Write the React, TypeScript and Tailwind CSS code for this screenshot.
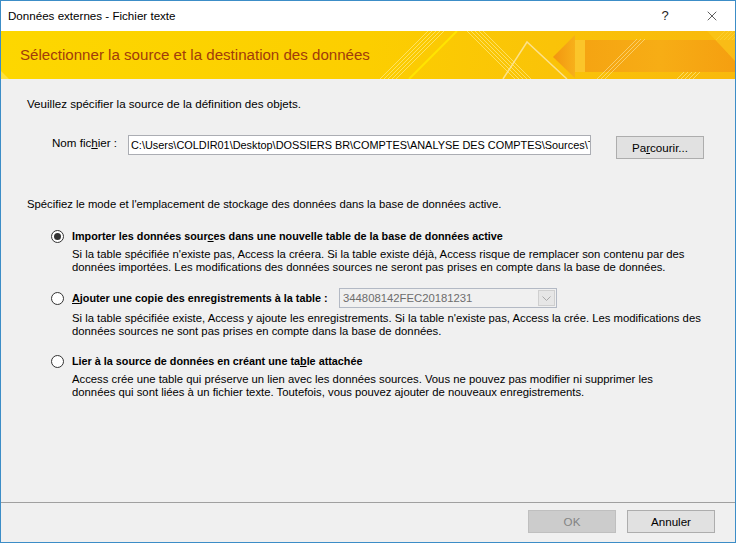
import { X } from 'lucide-react'

const font = { fontFamily: '"Liberation Sans", Arial, sans-serif' }

function Banner() {
    return (
        <div className="relative h-[48px] overflow-hidden bg-[#fcd200]">
            <svg className="absolute inset-0" width="734" height="48" viewBox="0 0 734 48">
                <defs>
                    <linearGradient id="bg" x1="0" y1="0" x2="1" y2="0">
                        <stop offset="0" stopColor="#fdd700" />
                        <stop offset="0.5" stopColor="#fcce00" />
                        <stop offset="0.75" stopColor="#fac308" />
                        <stop offset="1" stopColor="#f9b90c" />
                    </linearGradient>
                    <linearGradient id="arrow" x1="0" y1="0" x2="1" y2="0">
                        <stop offset="0" stopColor="#f2950f" />
                        <stop offset="1" stopColor="#f7b01a" />
                    </linearGradient>
                    <linearGradient id="shaft" x1="0" y1="0" x2="1" y2="0">
                        <stop offset="0" stopColor="#f5a412" />
                        <stop offset="0.5" stopColor="#f7ad15" />
                        <stop offset="1" stopColor="#f59f10" />
                    </linearGradient>
                </defs>
                <rect width="734" height="48" fill="url(#bg)" />
                <polygon points="0,40 8,48 0,48" fill="#fde96a" opacity="0.6" />
                {/* hatch groups */}
                <g stroke="#fff2a0" strokeWidth="1" opacity="0.6">
                    {[379, 383, 387, 391, 395].map(x => (
                        <line key={x} x1={x} y1="48" x2={x + 48} y2="0" />
                    ))}
                    {[466, 470, 474, 478, 482].map(x => (
                        <line key={x} x1={x} y1="0" x2={x + 48} y2="48" />
                    ))}
                    {[676, 680, 684, 688, 692].map(x => (
                        <line key={x} x1={x} y1="48" x2={x + 48} y2="0" />
                    ))}
                </g>
                <line x1="408" y1="48" x2="456" y2="0" stroke="#ffe400" strokeWidth="2" />
                <polygon points="584,9 734,9 734,41 584,41" fill="url(#shaft)" />
                <polygon points="574,9 584,9 584,41 574,41" fill="#fbc52a" />
                <polygon points="552,26 574,4 574,47" fill="url(#arrow)" />
                <polygon points="706,0 734,0 734,30" fill="#fbc81a" opacity="0.7" />
                <polyline points="502,48 526,11 566,48" fill="none" stroke="#fde6a0" strokeWidth="1.5" opacity="0.85" />
                <g stroke="#fde7a0" strokeWidth="1" opacity="0.6">
                    {[596, 600, 604].map(x => (
                        <line key={x} x1={x} y1="48" x2={x + 40} y2="8" />
                    ))}
                </g>
            </svg>
            <div className="relative flex h-full items-center pl-[19px] text-[15.1px] text-[#a13c0b]">
                Sélectionner la source et la destination des données
            </div>
        </div>
    )
}

function Radio({ checked }: { checked?: boolean }) {
    return (
        <span className="flex h-[13px] w-[13px] flex-shrink-0 items-center justify-center rounded-full border border-[#333333] bg-white">
            {checked && <span className="h-[7px] w-[7px] rounded-full bg-[#333333]" />}
        </span>
    )
}

export default function App() {
    return (
        <div
            className="flex h-[543px] w-[736px] flex-col overflow-hidden border border-[#3c8dc7] bg-[#f0f0f0] text-[11.3px] text-black"
            style={font}
        >
            {/* Title bar */}
            <div className="flex h-[30px] flex-shrink-0 items-center bg-white pl-[7px]">
                <span className="flex-1 text-[11.6px]">Données externes - Fichier texte</span>
                <span className="w-[20px] text-center text-[13px] text-[#222]">?</span>
                <span className="ml-[29px] mr-[15px] flex w-[16px] justify-center">
                    <X size={16} strokeWidth={1.1} color="#222" />
                </span>
            </div>

            <Banner />

            {/* Body */}
            <div className="flex flex-1 flex-col whitespace-nowrap pl-[26px] leading-[16px]">
                <div className="mt-[17px] h-[16px] text-[11.6px]">Veuillez spécifier la source de la définition des objets.</div>

                <div className="mt-[23px] flex h-[24px] items-start">
                    <span className="ml-[25px] w-[76px] text-[11.6px]">
                        Nom fic<span className="underline">h</span>ier :
                    </span>
                    <div className="h-[20px] w-[463px] overflow-hidden border border-[#abadb3] bg-white pl-[2px] text-[10.9px] leading-[18px]">
                        C:\Users\COLDIR01\Desktop\DOSSIERS BR\COMPTES\ANALYSE DES COMPTES\Sources\TEST.txt
                    </div>
                    <button className="ml-[25px] mt-[1px] h-[23px] w-[88px] border border-[#adadad] bg-[#e1e1e1] text-[11.6px] leading-[21px]">
                        Pa<span className="underline">r</span>courir...
                    </button>
                </div>

                <div className="mt-[37px] h-[16px]">
                    Spécifiez le mode et l'emplacement de stockage des données dans la base de données active.
                </div>

                {/* Option 1 */}
                <div className="ml-[24px] mt-[16px] flex h-[16px] items-center">
                    <Radio checked />
                    <span className="ml-[8px] text-[10.8px] font-bold">
                        Importer les données sour<span className="underline">c</span>es dans une nouvelle table de la base de données active
                    </span>
                </div>
                <div className="ml-[45px] mt-[4px] leading-[13px]">
                    <div>Si la table spécifiée n'existe pas, Access la créera. Si la table existe déjà, Access risque de remplacer son contenu par des</div>
                    <div>données importées. Les modifications des données sources ne seront pas prises en compte dans la base de données.</div>
                </div>

                {/* Option 2 */}
                <div className="ml-[24px] mt-[14px] flex h-[20px] items-center">
                    <Radio />
                    <span className="ml-[8px] w-[267px] text-[10.8px] font-bold">
                        <span className="underline">A</span>jouter une copie des enregistrements à la table :
                    </span>
                    <div className="flex h-[20px] w-[218px] items-center border border-[#b3b9c4] bg-[#f0f0f0]">
                        <span className="flex-1 pl-[3px] text-[#6d6d6d]">344808142FEC20181231</span>
                        <span className="mr-[1px] flex h-[16px] w-[17px] items-center justify-center border border-[#cfcfcf] bg-[#e6e6e6]">
                            <svg width="9" height="5" viewBox="0 0 9 5">
                                <polyline points="0.5,0.5 4.5,4.5 8.5,0.5" fill="none" stroke="#a9a9a9" strokeWidth="1" />
                            </svg>
                        </span>
                    </div>
                </div>
                <div className="ml-[45px] mt-[4px] leading-[13px]">
                    <div>Si la table spécifiée existe, Access y ajoute les enregistrements. Si la table n'existe pas, Access la crée. Les modifications des</div>
                    <div>données sources ne sont pas prises en compte dans la base de données.</div>
                </div>

                {/* Option 3 */}
                <div className="ml-[24px] mt-[15px] flex h-[16px] items-center">
                    <Radio />
                    <span className="ml-[8px] text-[10.8px] font-bold">
                        Lier à la source de données en créant une ta<span className="underline">b</span>le attachée
                    </span>
                </div>
                <div className="ml-[45px] mt-[4px] leading-[13px]">
                    <div>Access crée une table qui préserve un lien avec les données sources. Vous ne pouvez pas modifier ni supprimer les</div>
                    <div>données qui sont liées à un fichier texte. Toutefois, vous pouvez ajouter de nouveaux enregistrements.</div>
                </div>
            </div>

            {/* Footer */}
            <div className="flex h-[40px] flex-shrink-0 items-start justify-end border-t border-[#a0a0a0] pr-[20px] pt-[7px]">
                <button className="h-[23px] w-[88px] border border-[#bfbfbf] bg-[#cccccc] text-[11.6px] text-[#838383]">OK</button>
                <button className="ml-[11px] h-[23px] w-[88px] border border-[#adadad] bg-[#e1e1e1] text-[11.6px]">Annuler</button>
            </div>
        </div>
    )
}
